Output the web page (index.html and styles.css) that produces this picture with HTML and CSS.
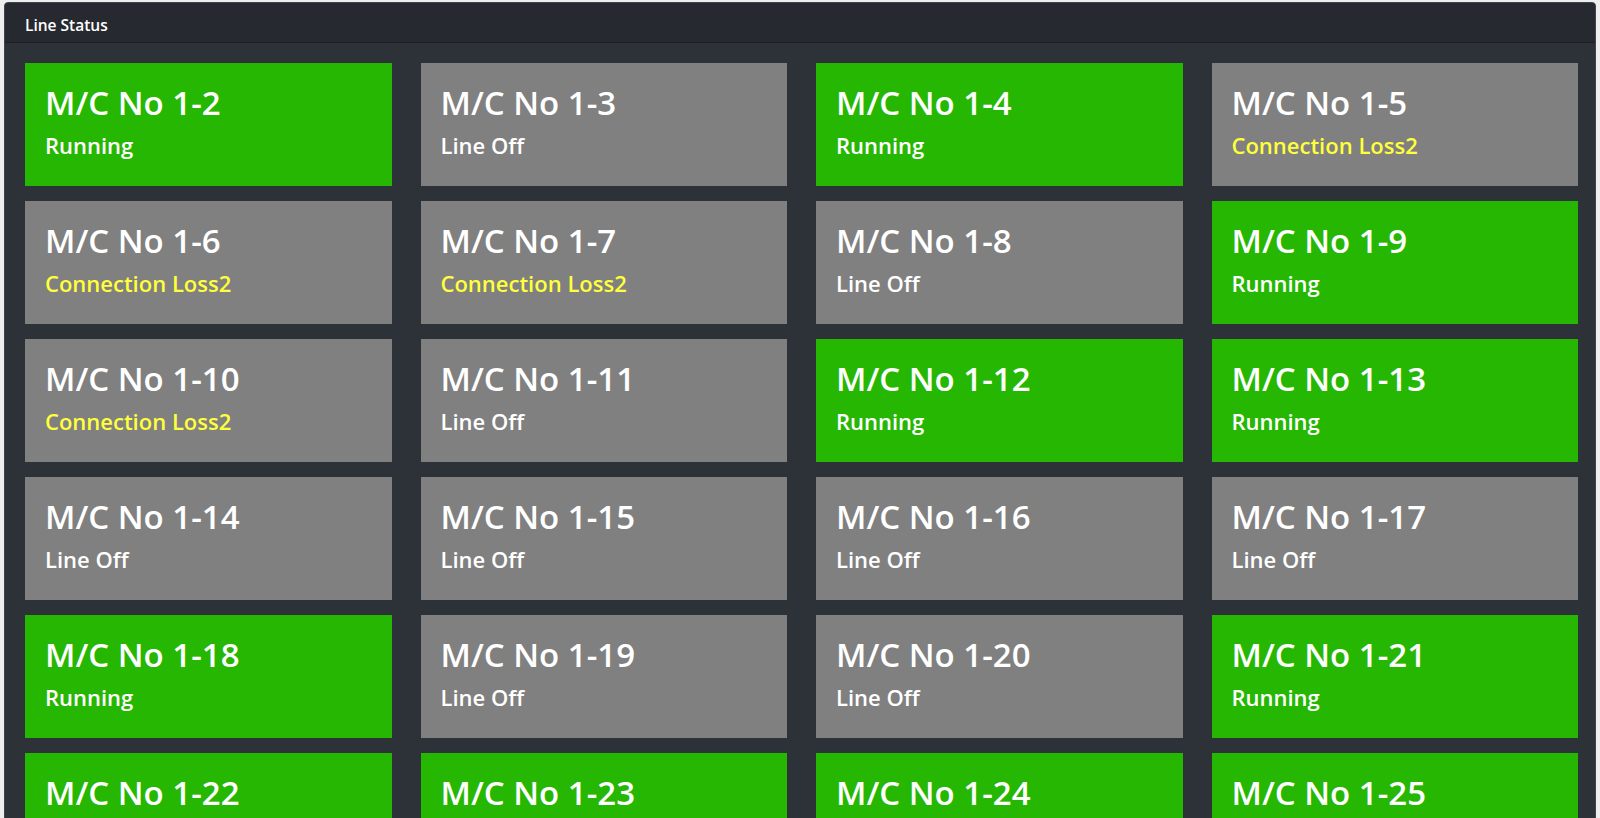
FILE: index.html
```html
<!DOCTYPE html>
<html lang="en">
<head>
    <meta charset="UTF-8">
    <meta name="viewport" content="width=device-width, initial-scale=1.0">
    <title>Line Status</title>

    <link rel="stylesheet" href="styles.css">

</head>
<body>

<div class="card">
    <!-- Card header -->
    <div class="card-header">Line Status</div>

    <!-- One tile per machine, coloured by its state -->
    <div class="card-body">
        <div class="machine-grid" id="machine-grid"></div>
    </div>
</div>

<script>
    // Machine states as reported by the line controller
    const machines = [
        ['1-2', 'run'],  ['1-3', 'off'],  ['1-4', 'run'],  ['1-5', 'loss'],
        ['1-6', 'loss'], ['1-7', 'loss'], ['1-8', 'off'],  ['1-9', 'run'],
        ['1-10', 'loss'], ['1-11', 'off'], ['1-12', 'run'], ['1-13', 'run'],
        ['1-14', 'off'], ['1-15', 'off'], ['1-16', 'off'], ['1-17', 'off'],
        ['1-18', 'run'], ['1-19', 'off'], ['1-20', 'off'], ['1-21', 'run'],
        ['1-22', 'run'], ['1-23', 'run'], ['1-24', 'run'], ['1-25', 'run']
    ];

    const labels = {
        run: 'Running',
        off: 'Line Off',
        loss: 'Connection Loss2'
    };

    const grid = document.getElementById('machine-grid');

    machines.forEach(([no, state]) => {
        const tile = document.createElement('div');
        tile.className = `machine machine-${state}`;
        tile.innerHTML = `<div class="machine-name">M/C No ${no}</div>
                          <div class="machine-state">${labels[state]}</div>`;
        grid.appendChild(tile);
    });
</script>

</body>
</html>
```

FILE: styles.css
```css
/* Page background */
html, body {
    overflow: hidden;
}

body {
    font-family: 'Open Sans', 'Noto Sans', sans-serif;
    margin: 0;
    padding: 2px 4px 0 4px;
    background-color: #eeeeee;
}

/* Dark card holding the whole board */
.card {
    background-color: #2d3138;
    border: 1px solid #40454d;
    border-radius: 4px;
    overflow: hidden;
}

.card-header {
    background-color: #262a30;
    border-bottom: 1px solid #1c1f24;
    color: #ffffff;
    font-size: 15.5px;
    font-weight: 600;
    height: 33px;
    line-height: 33px;
    padding: 6px 0 0 20px;
}

.card-body {
    padding: 20px 17px 20px 20px;
}

/* 4 column grid of machine tiles */
.machine-grid {
    display: grid;
    grid-template-columns: repeat(4, 1fr);
    column-gap: 29px;
    row-gap: 15px;
}

.machine {
    height: 123px;
    padding: 21px 20px 0 20px;
    box-sizing: border-box;
    color: #ffffff;
}

.machine-name {
    font-size: 33px;
    font-weight: 600;
    line-height: 38px;
}

.machine-state {
    font-size: 22px;
    font-weight: 600;
    line-height: 30px;
    margin-top: 8px;
}

/* State colours */
.machine-run {
    background-color: #26b702;
}

.machine-off {
    background-color: #808080;
}

.machine-loss {
    background-color: #808080;
}

.machine-loss .machine-state {
    color: #ffff3c;
}
```
